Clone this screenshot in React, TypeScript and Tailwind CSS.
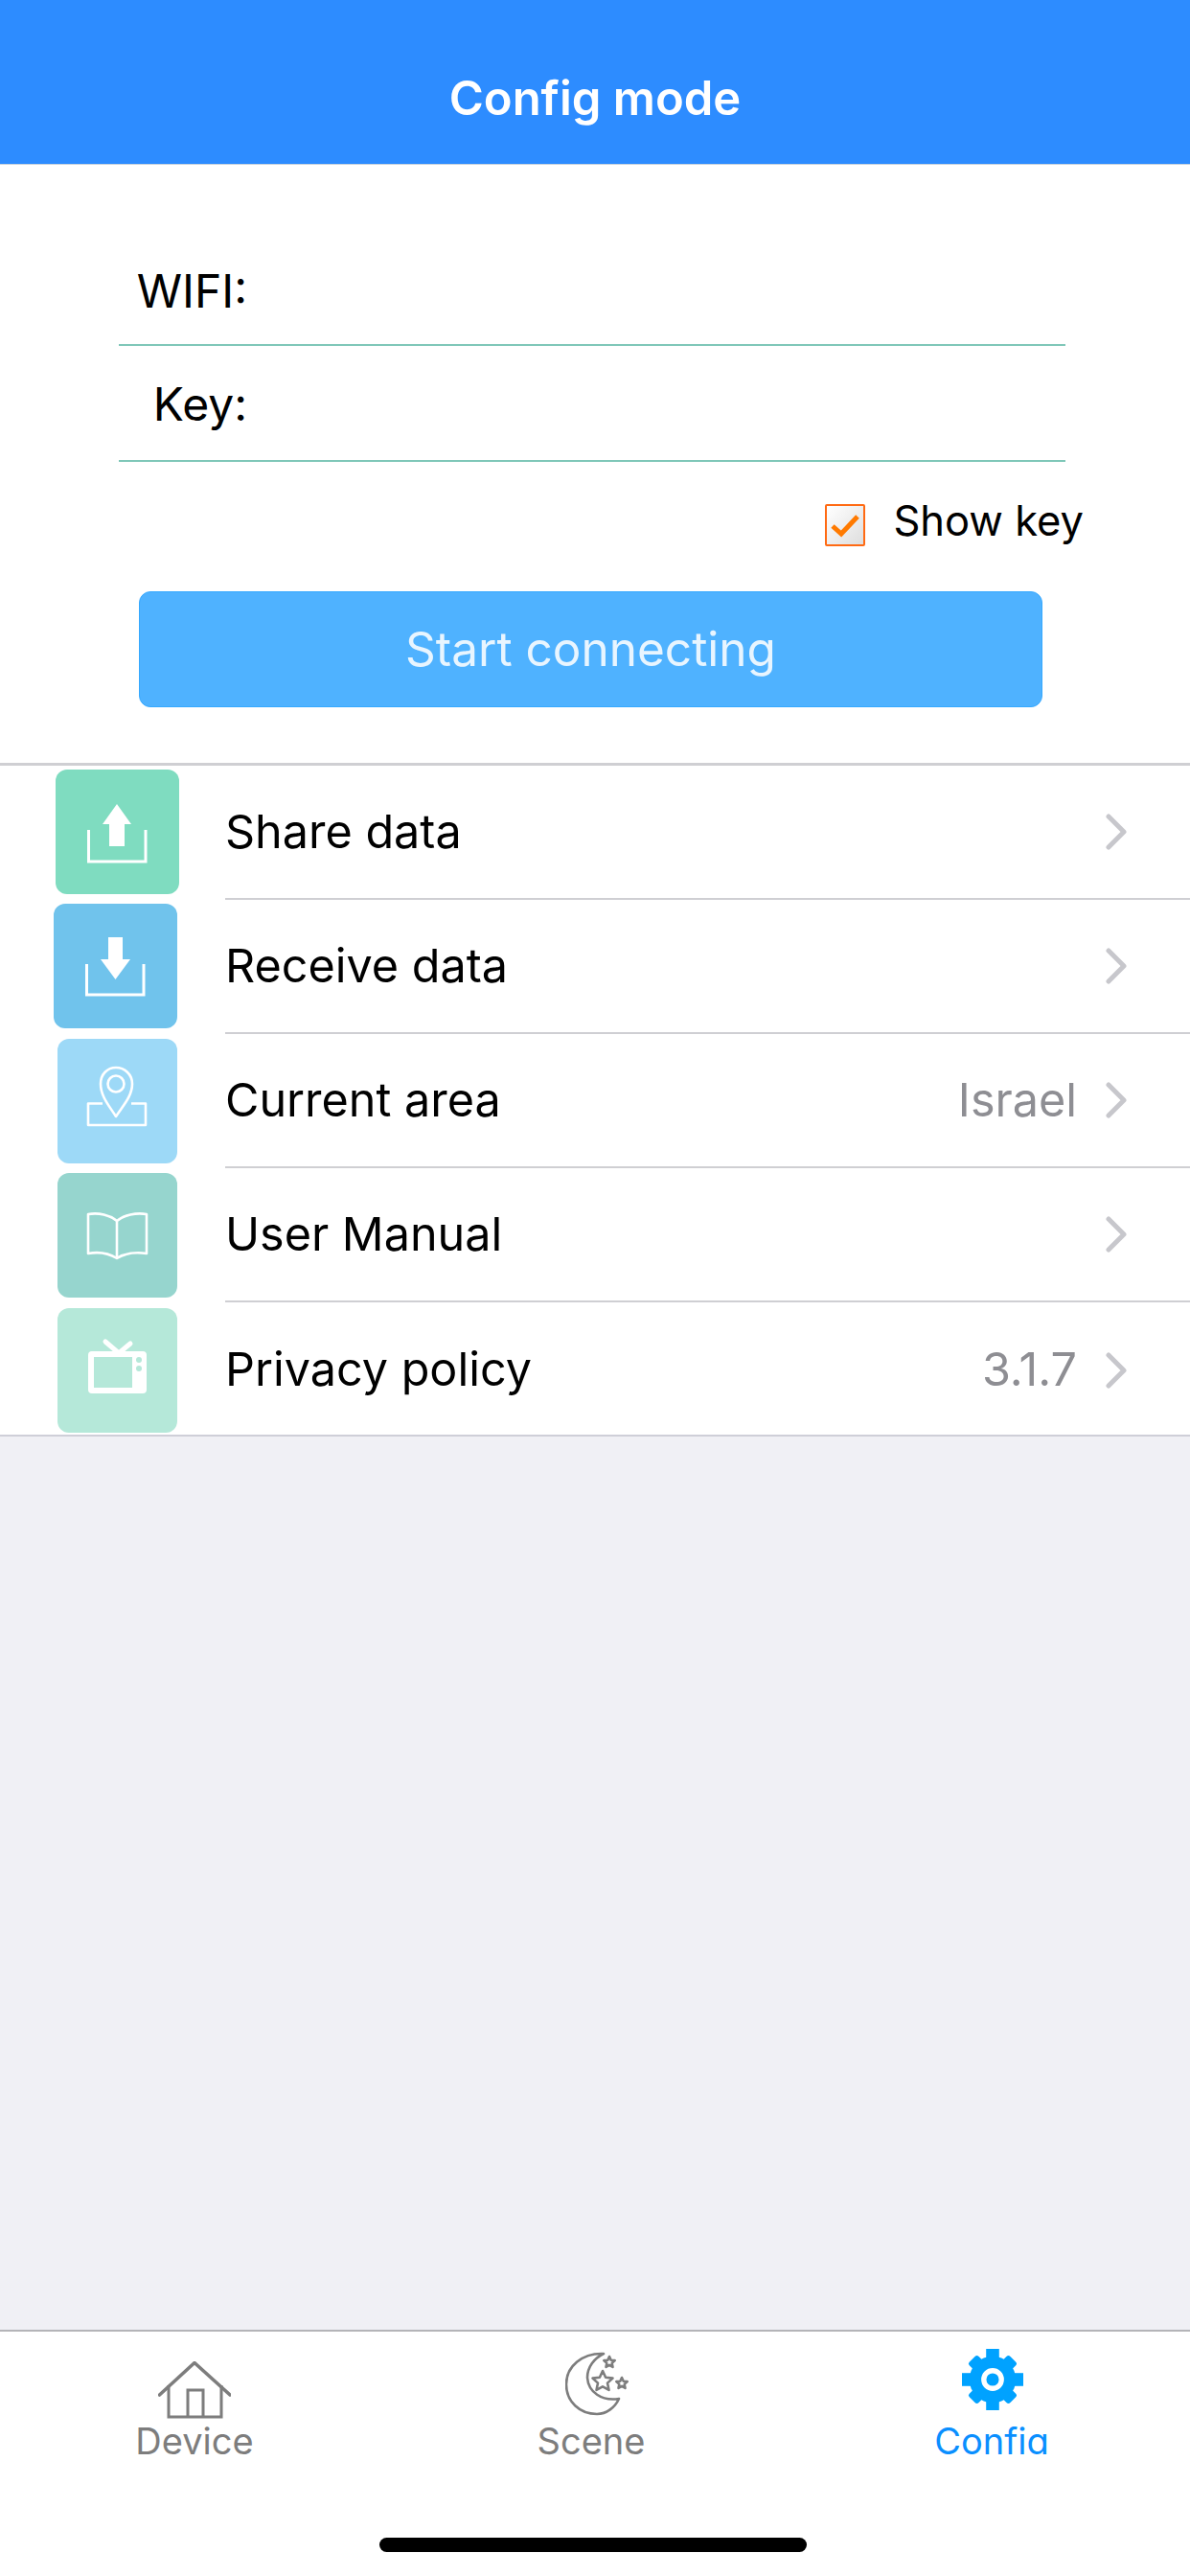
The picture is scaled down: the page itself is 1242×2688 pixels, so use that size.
import React from 'react';

const font = { fontFamily: 'Inter, "Noto Sans", sans-serif' };

const starPoints = (cx: number, cy: number, r: number) =>
  Array.from({ length: 10 }, (_, i) => {
    const radius = i % 2 === 0 ? r : r * 0.48;
    const angle = (Math.PI / 5) * i - Math.PI / 2;
    return `${(cx + radius * Math.cos(angle)).toFixed(1)},${(cy + radius * Math.sin(angle)).toFixed(1)}`;
  }).join(' ');

const ShareIcon = () => (
  <svg viewBox="0 0 129 130" className="w-full h-full">
    <path d="M64 36L79 57H72V80H56V57H49Z" fill="#fff" />
    <path d="M34.5 63V96H94V63" fill="none" stroke="#fff" strokeWidth="3" />
  </svg>
);

const ReceiveIcon = () => (
  <svg viewBox="0 0 129 130" className="w-full h-full">
    <path d="M57 35H72V58H80L64.5 79L49 58H57Z" fill="#fff" />
    <path d="M34.5 63V95H94V63" fill="none" stroke="#fff" strokeWidth="3" />
  </svg>
);

const AreaIcon = () => (
  <svg viewBox="0 0 125 130" className="w-full h-full">
    <g fill="none" stroke="#fff" strokeWidth="2.6" strokeLinejoin="round">
      <path d="M61 81C54 70 45 60 45 47C45 37 52 30 61 30C70 30 78 37 78 47C78 60 68 70 61 81Z" />
      <circle cx="61" cy="47" r="8.5" />
      <path d="M47 67.5H32V90H92V67.5H77" />
    </g>
  </svg>
);

const ManualIcon = () => (
  <svg viewBox="0 0 125 130" className="w-full h-full">
    <g fill="none" stroke="#fff" strokeWidth="2.6" strokeLinejoin="round">
      <path d="M62 50C55 44 43 41 32 43V84C43 82 54 84 62 89C70 84 82 82 93 84V43C82 41 69 44 62 50V89" />
    </g>
  </svg>
);

const PolicyIcon = () => (
  <svg viewBox="0 0 125 130" className="w-full h-full">
    <path d="M50 35L64 47L76 37" fill="none" stroke="#fff" strokeWidth="5" strokeLinecap="round" />
    <path
      fillRule="evenodd"
      d="M36 45H89Q93 45 93 49V85Q93 89 89 89H36Q32 89 32 85V49Q32 45 36 45ZM38 51V83H78V51Z"
      fill="#fff"
    />
    <circle cx="85" cy="54" r="3" fill="#b5e8d9" />
    <circle cx="85" cy="63" r="3" fill="#b5e8d9" />
  </svg>
);

const Chevron = () => (
  <svg viewBox="0 0 22 38" className="w-[22px] h-[38px] ml-[30px] shrink-0">
    <path d="M3 3L19 19L3 35" fill="none" stroke="#c7c7cc" strokeWidth="5" strokeLinecap="round" strokeLinejoin="round" />
  </svg>
);

const HomeIcon = () => (
  <svg viewBox="0 0 76 60" className="w-[76px] h-[60px]">
    <g fill="none" stroke="#7d7d7d" strokeWidth="3">
      <path d="M1.5 35L38 1.5L75 35" strokeWidth="3.6" strokeLinecap="round" strokeLinejoin="round" />
      <path d="M11 25V58H66V25" />
      <path d="M31 58V30H47V58" />
    </g>
  </svg>
);

const SceneIcon = () => (
  <svg viewBox="0 0 70 70" className="w-[70px] h-[70px] ml-[16px]">
    <g fill="none" stroke="#7d7d7d" strokeWidth="2.6" strokeLinejoin="round">
      <path d="M40 2C18 1 1 15 1 34C1 52 15 65 33 65C43 65 52 58 56 49C38 52 24 42 23 27C23 16 30 7 40 2Z" />
      <polygon points={starPoints(39, 31, 11)} />
      <polygon points={starPoints(46, 11, 6)} />
      <polygon points={starPoints(59, 33, 6)} />
    </g>
  </svg>
);

const GearIcon = () => (
  <svg viewBox="0 0 66 66" className="w-[64px] h-[66px] ml-[2px]">
    <g fill="#00a2ff">
      <circle cx="33" cy="33" r="25" />
      <rect x="26" y="0" width="14" height="66" />
      <rect x="0" y="26" width="66" height="14" />
      <rect x="26" y="2" width="14" height="62" rx="3" transform="rotate(45 33 33)" />
      <rect x="26" y="2" width="14" height="62" rx="3" transform="rotate(-45 33 33)" />
    </g>
    <circle cx="33" cy="33" r="9.5" fill="none" stroke="#fff" strokeWidth="5.5" />
  </svg>
);

const rows = [
  { label: 'Share data', tile: 'ml-[58px] mb-[3px] w-[129px] bg-[#7fdcc0]', icon: <ShareIcon />, gap: 'ml-[48px]', row: 'h-[140px]' },
  { label: 'Receive data', tile: 'ml-[56px] mb-[3px] w-[129px] bg-[#70c3ec]', icon: <ReceiveIcon />, gap: 'ml-[50px]', row: 'h-[140px]' },
  { label: 'Current area', value: 'Israel', tile: 'ml-[60px] w-[125px] bg-[#9dd9f7]', icon: <AreaIcon />, gap: 'ml-[50px]', row: 'h-[140px]' },
  { label: 'User Manual', tile: 'ml-[60px] w-[125px] bg-[#96d5ce]', icon: <ManualIcon />, gap: 'ml-[50px]', row: 'h-[140px]' },
  { label: 'Privacy policy', value: '3.1.7', tile: 'ml-[60px] w-[125px] bg-[#b5e8d9]', icon: <PolicyIcon />, gap: 'ml-[50px]', row: 'h-[138px] pt-[3px]' },
];

export default function App() {
  return (
    <div className="w-[1242px] h-[2688px] flex flex-col bg-[#f0f0f5] overflow-hidden" style={font}>
      {/* Title bar */}
      <div className="h-[172px] shrink-0 bg-[#2d8cff] border-b border-[#c9d3de] flex items-center justify-center pt-[34px]">
        <h1 className="text-[49px] font-semibold text-white leading-none">Config mode</h1>
      </div>

      {/* Wifi form */}
      <div className="h-[627px] shrink-0 bg-white border-b-[3px] border-[#cfcfd3] flex flex-col">
        <div className="mt-[68px] ml-[124px] mr-[130px] h-[121px] border-b-2 border-[#7fc7b8] flex items-center">
          <span className="w-[134px] text-right text-[48px] leading-none text-black pt-[8px]">WIFI:</span>
        </div>
        <div className="ml-[124px] mr-[130px] h-[121px] border-b-2 border-[#7fc7b8] flex items-center">
          <span className="w-[134px] text-right text-[48px] leading-none text-black pt-[2px]">Key:</span>
        </div>
        <div className="mt-[44px] mr-[111px] h-[44px] flex items-center justify-end">
          <div className="w-[42px] h-[44px] rounded-[2px] border-2 border-[#ff6a13] bg-gradient-to-br from-white to-[#dedede] flex items-center justify-center">
            <svg viewBox="0 0 32 32" className="w-[32px] h-[32px]">
              <path d="M3 17L12 25L29 7" fill="none" stroke="#ff7a00" strokeWidth="5" />
            </svg>
          </div>
          <span className="ml-[29px] pb-[8px] text-[43.5px] leading-none text-black">Show key</span>
        </div>
        <div className="mt-[47px] ml-[145px] w-[943px] h-[121px] rounded-[12px] border border-[#36a9ff] bg-[#4fb2ff] flex items-center justify-center">
          <span className="text-[49.5px] leading-none text-[#e8f5ff]">Start connecting</span>
        </div>
      </div>

      {/* Settings list */}
      <div className="bg-white border-b-2 border-[#cfcfd8] shrink-0">
        {rows.map((row, i) => (
          <div key={row.label} className={`${row.row} flex items-center`}>
            <div className={`${row.tile} h-[130px] rounded-[12px] shrink-0`}>{row.icon}</div>
            <div
              className={`${row.gap} flex-1 h-full flex items-center pr-[66px] ${
                i < rows.length - 1 ? 'border-b-2 border-[#cfcfd3]' : ''
              }`}
            >
              <span className="flex-1 text-[48.5px] leading-none text-black">{row.label}</span>
              {row.value && <span className="text-[48.5px] leading-none text-[#8e8e93]">{row.value}</span>}
              <Chevron />
            </div>
          </div>
        ))}
      </div>

      <div className="flex-1" />

      {/* Tab bar */}
      <div className="h-[257px] shrink-0 bg-white border-t-2 border-[#b4b4b8] relative">
        <div className="grid grid-cols-3 h-[130px]">
          <div className="flex flex-col items-center pt-[23px] pr-[8px]">
            <div className="h-[68px] flex items-end"><HomeIcon /></div>
            <div className="h-[46px] overflow-hidden text-[38px] leading-[46px] text-[#7d7d7d]">Device</div>
          </div>
          <div className="flex flex-col items-center pt-[17px] pr-[8px]">
            <div className="h-[74px] flex items-end"><SceneIcon /></div>
            <div className="h-[46px] overflow-hidden text-[38px] leading-[46px] text-[#7d7d7d]">Scene</div>
          </div>
          <div className="flex flex-col items-center pt-[17px]">
            <div className="h-[74px] flex items-start"><GearIcon /></div>
            <div className="h-[37px] overflow-hidden text-[38px] leading-[46px] text-[#0a8fff]">Config</div>
          </div>
        </div>
        {/* Home indicator */}
        <div className="absolute left-[396px] top-[215px] w-[446px] h-[15px] rounded-full bg-black" />
      </div>
    </div>
  );
}
